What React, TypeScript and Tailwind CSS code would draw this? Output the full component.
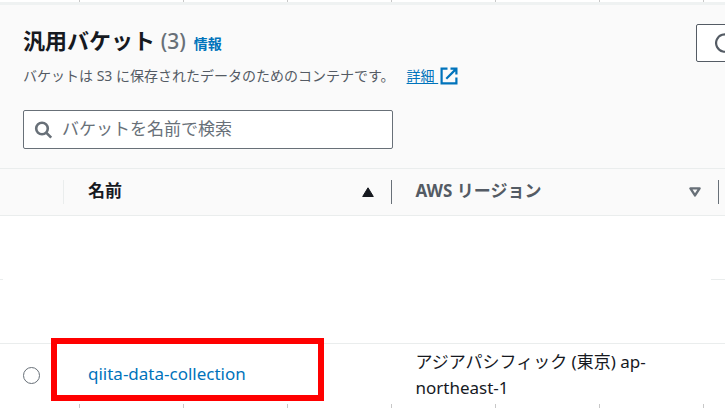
const GridTicks = () => (
  <svg className="block h-full w-full" aria-hidden="true">
    <defs>
      <pattern id="ticks" width="104" height="8" patternUnits="userSpaceOnUse">
        <rect x="79" width="1" height="8" fill="#c8c8c8" />
      </pattern>
    </defs>
    <rect width="100%" height="100%" fill="url(#ticks)" />
  </svg>
);

const SearchIcon = () => (
  <svg className="h-5 w-5 shrink-0" viewBox="0 0 20 20" fill="none" stroke="#687078" strokeWidth="2.6" aria-hidden="true">
    <circle cx="8" cy="8.5" r="5.8" />
    <path d="M12.2 12.7l5 5" />
  </svg>
);

const ExternalIcon = () => (
  <svg className="h-[18px] w-[18px]" viewBox="0 0 18 18" fill="none" stroke="#0073bb" strokeWidth="2.2" aria-hidden="true">
    <path d="M7.5 1.6H1.6v14.8h14.8v-5.9M10.5 1.6h5.9v5.9M16.4 1.6L6.3 11.7" />
  </svg>
);

const RefreshIcon = () => (
  <svg className="h-5 w-5" viewBox="0 0 20 20" fill="none" stroke="#545b64" strokeWidth="2.2" aria-hidden="true">
    <path d="M18.5 10.5a8.7 8.7 0 1 1-4-7.8M15 -1v5h-5" />
  </svg>
);

const Header = () => (
  <header className="px-[23px] pt-[19px] pb-[19px]">
    <div className="flex items-start justify-between">
      <div>
        <div className="flex h-9 items-baseline gap-2">
          <h2 className="text-[22px] leading-8 font-bold text-[#16191f]">
            汎用バケット <span className="text-[21px] font-medium text-[#687078]">(3)</span>
          </h2>
          <a href="#info" className="text-sm font-bold text-[#0073bb]">情報</a>
        </div>
        <p className="flex items-center text-sm leading-8 whitespace-nowrap text-[#545b64]">
          バケットは S3 に保存されたデータのためのコンテナです。
          <a href="#more" className="ml-3 flex items-center gap-0.5 text-[#0073bb]">
            <span className="whitespace-pre underline underline-offset-2">詳細 </span>
            <ExternalIcon />
          </a>
        </p>
      </div>
      <button
        aria-label="更新"
        className="-mr-[52px] flex h-[38px] w-[58px] shrink-0 items-center justify-center rounded-xs border border-[#545b64] bg-white"
      >
        <RefreshIcon />
      </button>
    </div>
    <label className="mt-[18px] flex h-[39px] w-[370px] items-center gap-2 rounded-xs border border-[#687078] bg-white px-[10px]">
      <SearchIcon />
      <input
        type="text"
        aria-label="バケットを名前で検索"
        placeholder="バケットを名前で検索"
        className="min-w-0 flex-1 pb-0.5 text-[17px] leading-6 outline-none placeholder:text-[#687078]"
      />
    </label>
  </header>
);

const BucketTable = () => (
  <div className="relative">
    <table className="w-full table-fixed border-collapse text-left text-[17px]">
      <colgroup>
        <col className="w-16" />
        <col />
        <col />
        <col className="w-[6px]" />
      </colgroup>
      <thead>
        <tr className="h-[47px] border-y border-[#eaeded] bg-[#fafafa]">
          <th className="p-0">
            <div className="h-6 border-r border-[#eaeded]" />
          </th>
          <th className="p-0 text-[#16191f]">
            <button className="flex h-6 w-full items-center justify-between border-r border-[#687078] pr-4 pl-6">
              <span className="pb-0.5">名前</span>
              <svg className="h-3 w-3.5" viewBox="0 0 14 12" fill="#16191f" aria-hidden="true">
                <path d="M7 1.8L12.3 10.5H1.7z" stroke="#16191f" strokeLinejoin="round" />
              </svg>
            </button>
          </th>
          <th className="p-0 text-[#545b64]">
            <button className="flex h-6 w-full items-center justify-between border-r border-[#687078] pr-4 pl-6">
              <span className="pb-0.5">AWS リージョン</span>
              <svg className="h-3 w-3.5" viewBox="0 0 14 12" fill="none" stroke="#687078" strokeWidth="2.4" aria-hidden="true">
                <path d="M2.4 2.4h9.2L7 9.4z" strokeLinejoin="round" />
              </svg>
            </button>
          </th>
          <th className="p-0" />
        </tr>
      </thead>
      <tbody>
        <tr className="h-16 border-b border-[#eaeded]">
          <td colSpan={4} />
        </tr>
        <tr className="h-16 border-b border-[#eaeded]">
          <td colSpan={4} />
        </tr>
        <tr className="h-[60px]">
          <td className="p-0 pl-[23px] align-middle">
            <input
              type="radio"
              name="bucket"
              aria-label="qiita-data-collection"
              className="mt-1 block h-[17px] w-[17px] appearance-none rounded-full border border-[#687078] bg-white"
            />
          </td>
          <td className="p-0 pl-6 text-[#0073bb]">
            <a href="#bucket">qiita-data-collection</a>
          </td>
          <td className="p-0 pt-0.5 pr-12 pl-6 leading-[26px] text-[#16191f]">
            アジアパシフィック (東京) ap-northeast-1
          </td>
          <td className="p-0" />
        </tr>
      </tbody>
    </table>

    {/* blanked out rows */}
    <div className="absolute top-[49px] right-[14px] left-[3px] h-[124px] bg-white" />
    {/* highlight box */}
    <div className="pointer-events-none absolute top-[170px] left-[51px] h-[63px] w-[273px] border-6 border-[#ff0000]" />
  </div>
);

export default function App() {
  return (
    <div className="overflow-hidden bg-white font-['Noto_Sans','Noto_Sans_CJK_JP',sans-serif]">
      <div className="h-[2px]">
        <GridTicks />
      </div>
      <main>
        <section className="border-t-3 border-[#eff2f2] bg-[#fafafa]">
          <Header />
        </section>
        <BucketTable />
      </main>
      <div className="h-1">
        <GridTicks />
      </div>
    </div>
  );
}
